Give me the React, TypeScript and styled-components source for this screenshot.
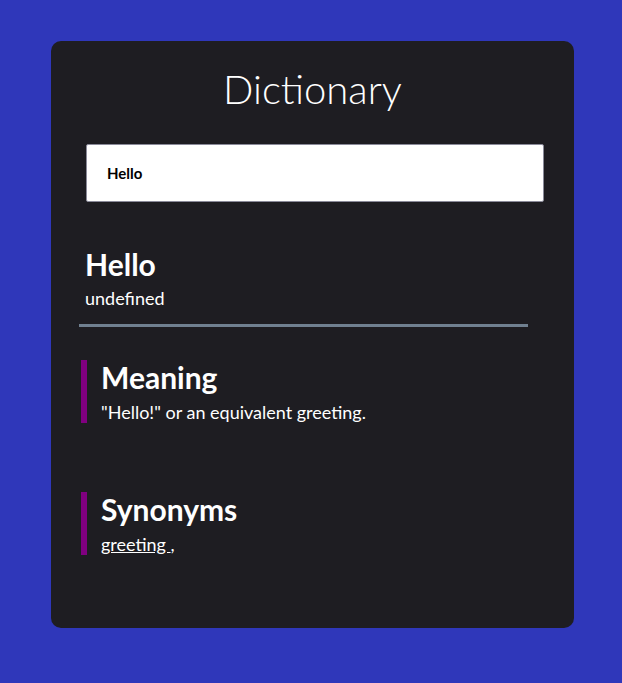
import React from "react";
import styled, { createGlobalStyle } from "styled-components";

const Global = createGlobalStyle`
  html, body { margin: 0; padding: 0; background: #2f37ba; }
  body { font-family: "Lato", "Open Sans", sans-serif; }
  * { box-sizing: border-box; }
`;

const Page = styled.div`
  min-height: 683px;
  padding: 41px 48px 55px 51px;
`;

const Card = styled.main`
  background: #1e1d22;
  border-radius: 10px;
  height: 587px;
  padding: 22px 46px 0 28px;
  color: #fff;
`;

const Title = styled.h1`
  margin: 0;
  text-align: center;
  font-weight: 300;
  font-size: 40px;
  line-height: 52px;
  padding-left: 18px;
`;

const SearchInput = styled.input`
  display: block;
  margin: 29px 0 0 7px;
  width: 458px;
  height: 58px;
  border: 1px solid #8a8a99;
  border-radius: 2px;
  padding: 0 20px;
  font-family: inherit;
  font-weight: 700;
  font-size: 15px;
  color: #000;
  background: #fff;
  outline: none;
`;

const WordBlock = styled.section`
  padding: 44px 0 0 6px;
`;

const Word = styled.h2`
  margin: 0;
  font-size: 30px;
  font-weight: 700;
  line-height: 36px;
`;

const Phonetic = styled.p`
  margin: 5px 0 0;
  font-size: 18px;
  line-height: 22px;
`;

const Divider = styled.hr`
  margin: 15px 0 0 0;
  width: 449px;
  border: none;
  height: 3px;
  background: #708090;
`;

const Section = styled.section<{ $top: number }>`
  margin: ${(p) => p.$top}px 0 0 2px;
  border-left: 6px solid #800080;
  padding-left: 14px;
  height: 63px;
`;

const SectionTitle = styled.h3`
  margin: 0;
  font-size: 30px;
  font-weight: 700;
  line-height: 34px;
`;

const SectionText = styled.p`
  margin: 7px 0 0;
  font-size: 18px;
  line-height: 22px;
`;

const SynLink = styled.a`
  color: #fff;
  text-decoration: underline;
`;

export default function App() {
  return (
    <>
      <Global />
      <Page>
        <Card>
          <Title>Dictionary</Title>
          <SearchInput defaultValue="Hello" />
          <WordBlock>
            <Word>Hello</Word>
            <Phonetic>undefined</Phonetic>
          </WordBlock>
          <Divider />
          <Section $top={33}>
            <SectionTitle>Meaning</SectionTitle>
            <SectionText>"Hello!" or an equivalent greeting.</SectionText>
          </Section>
          <Section $top={69}>
            <SectionTitle>Synonyms</SectionTitle>
            <SectionText>
              <SynLink href="#">greeting </SynLink>,
            </SectionText>
          </Section>
        </Card>
      </Page>
    </>
  );
}
